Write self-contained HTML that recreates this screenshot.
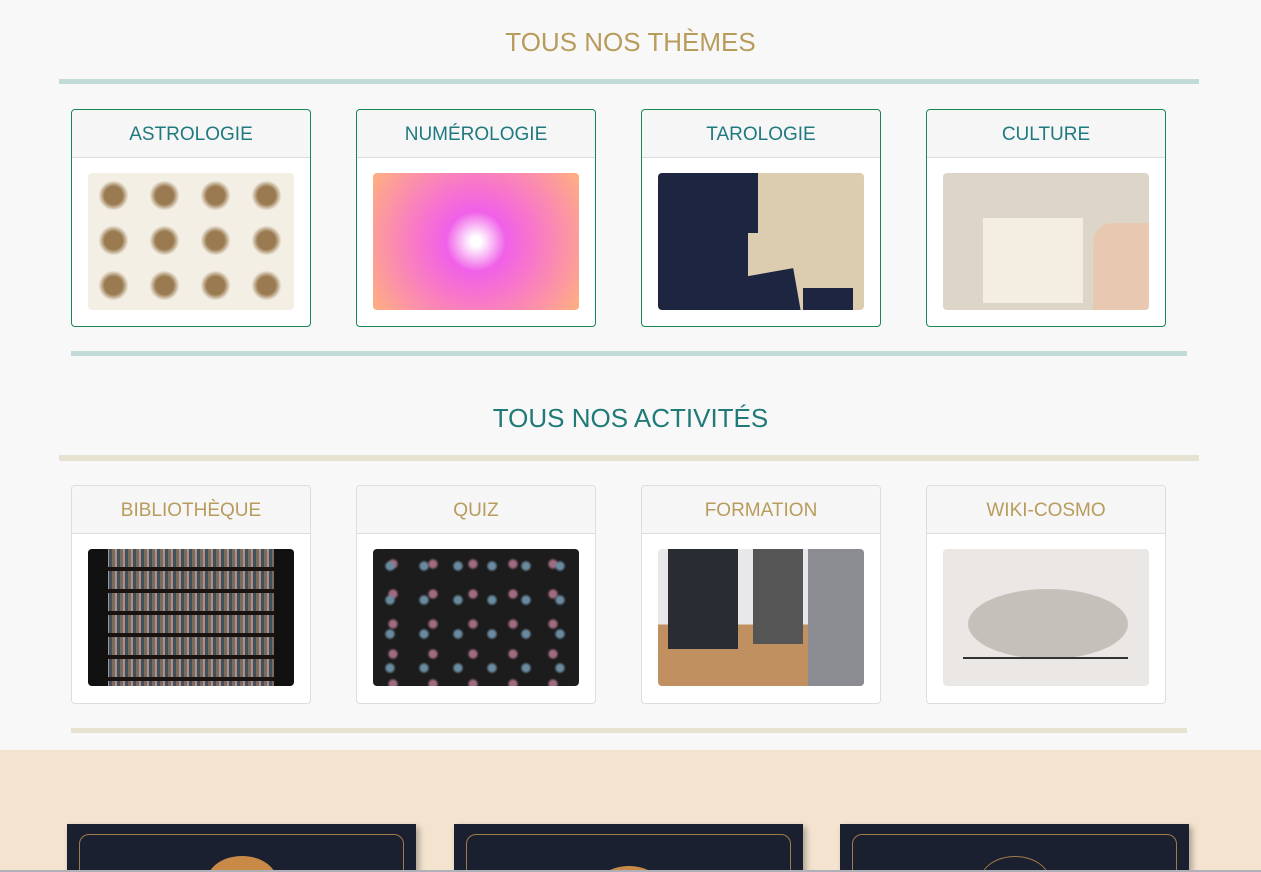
<!DOCTYPE html>
<html style="overflow:hidden;height:872px"><head><meta charset="utf-8"><style>
*{box-sizing:border-box;margin:0;padding:0}
body{width:1261px;height:872px;overflow:hidden;background:#f8f8f8;font-family:"Liberation Sans","DejaVu Sans",sans-serif;position:relative}
.a{position:absolute}
.t{position:absolute;left:0;width:1261px;text-align:center;font-size:26px;letter-spacing:0}
.card{position:absolute;width:240px;background:#fff;border-radius:4px}
.card .h{height:48px;background:#f6f6f6;border-bottom:1px solid #ddd;text-align:center;line-height:50px;font-size:19px;border-radius:4px 4px 0 0}
.card .im{position:absolute;left:16px;top:63px;width:206px;height:137px;border-radius:4px;overflow:hidden}
.g{border:1px solid #198754}.g .h{color:#1f7a80}
.y{border:1px solid #ddd}.y .h{color:#b89c5c}
.bot{position:absolute;left:0;top:750px;width:1261px;height:122px;background:#f3e3cf;overflow:hidden}
.dk{position:absolute;top:74px;width:349px;height:80px;background:#1b2030;box-shadow:3px 3px 6px rgba(0,0,0,.3);overflow:hidden}
.dk:after{content:"";position:absolute;left:12px;top:10px;right:12px;bottom:-20px;border:1px solid #a07a48;border-radius:10px}
.dk i{position:absolute;left:140px;top:32px;width:70px;height:50px;border-radius:50%;background:#c98a48}
</style></head><body>
<div class="t" style="top:27px;color:#b89c5c">TOUS NOS THÈMES</div>
<div class="a" style="left:59px;top:79px;width:1140px;height:5px;background:#c3dbd8"></div>

<div class="card g" style="left:71px;top:109px;height:218px"><div class="h">ASTROLOGIE</div><div class="im" style="background:#f3efe4;background-image:radial-gradient(circle,#9a7a50 0 9px,transparent 15px);background-size:51px 45px;background-position:0 0"></div></div>
<div class="card g" style="left:356px;top:109px;height:218px"><div class="h">NUMÉROLOGIE</div><div class="im" style="background:radial-gradient(circle at 50% 50%,#fff 0 5px,#f060e8 30px,#f878c8 60px,#ffb080 100%)"></div></div>
<div class="card g" style="left:641px;top:109px;height:218px"><div class="h">TAROLOGIE</div><div class="im" style="background:#dccdb0"><div class="a" style="left:0;top:0;width:90px;height:137px;background:#1e2540"></div><div class="a" style="left:40px;top:0;width:60px;height:60px;background:#1e2540"></div><div class="a" style="left:80px;top:100px;width:60px;height:50px;background:#1e2540;transform:rotate(-10deg)"></div><div class="a" style="left:145px;top:115px;width:50px;height:40px;background:#1e2540"></div></div></div>
<div class="card g" style="left:926px;top:109px;height:218px"><div class="h">CULTURE</div><div class="im" style="background:#ddd5c8"><div class="a" style="left:40px;top:45px;width:100px;height:85px;background:#f3ede2"></div><div class="a" style="left:150px;top:50px;width:56px;height:87px;background:#e8c8b0;border-radius:20px 0 0 0"></div></div></div>

<div class="a" style="left:71px;top:351px;width:1116px;height:5px;background:#c3dbd8"></div>

<div class="t" style="top:403px;color:#1f7a78">TOUS NOS ACTIVITÉS</div>
<div class="a" style="left:59px;top:455px;width:1140px;height:6px;background:#e6e3d2"></div>

<div class="card y" style="left:71px;top:485px;height:219px"><div class="h">BIBLIOTHÈQUE</div><div class="im" style="background:repeating-linear-gradient(90deg,#7a6a60 0 3px,#b09080 3px 5px,#405060 5px 8px),#333"><div class="a" style="left:0;top:0;width:206px;height:137px;background:repeating-linear-gradient(180deg,transparent 0 18px,#1a1210 18px 22px)"></div><div class="a" style="left:0;top:0;width:20px;height:137px;background:#111"></div><div class="a" style="right:0;top:0;width:20px;height:137px;background:#111"></div></div></div>
<div class="card y" style="left:356px;top:485px;height:219px"><div class="h">QUIZ</div><div class="im" style="background:#1c1c1c;background-image:radial-gradient(circle,#6a8aa0 0 3px,transparent 6px),radial-gradient(circle,#a06a80 0 3px,transparent 6px);background-size:34px 34px,40px 30px"></div></div>
<div class="card y" style="left:641px;top:485px;height:219px"><div class="h">FORMATION</div><div class="im" style="background:linear-gradient(180deg,#e8e8ea 0 55%,#c09060 55%)"><div class="a" style="left:10px;top:0;width:70px;height:100px;background:#2a2c34"></div><div class="a" style="left:95px;top:0;width:50px;height:95px;background:#555"></div><div class="a" style="left:150px;top:0;width:56px;height:137px;background:#8a8c92"></div></div></div>
<div class="card y" style="left:926px;top:485px;height:219px"><div class="h">WIKI-COSMO</div><div class="im" style="background:#ebe7e4"><div class="a" style="left:25px;top:40px;width:160px;height:70px;border-radius:50%;background:#c5c0ba"></div><div class="a" style="left:20px;top:108px;width:165px;height:2px;background:#333"></div></div></div>

<div class="a" style="left:71px;top:728px;width:1116px;height:5px;background:#e6e3d2"></div>

<div class="bot">
<div class="dk" style="left:67px"><i></i></div>
<div class="dk" style="left:454px"><i style="top:42px"></i></div>
<div class="dk" style="left:840px"><i style="background:none;border:1px solid #a07a48"></i></div>
<div class="a" style="left:0;top:120px;width:1261px;height:2px;background:#b0b0b8"></div>
</div>
</body></html>
